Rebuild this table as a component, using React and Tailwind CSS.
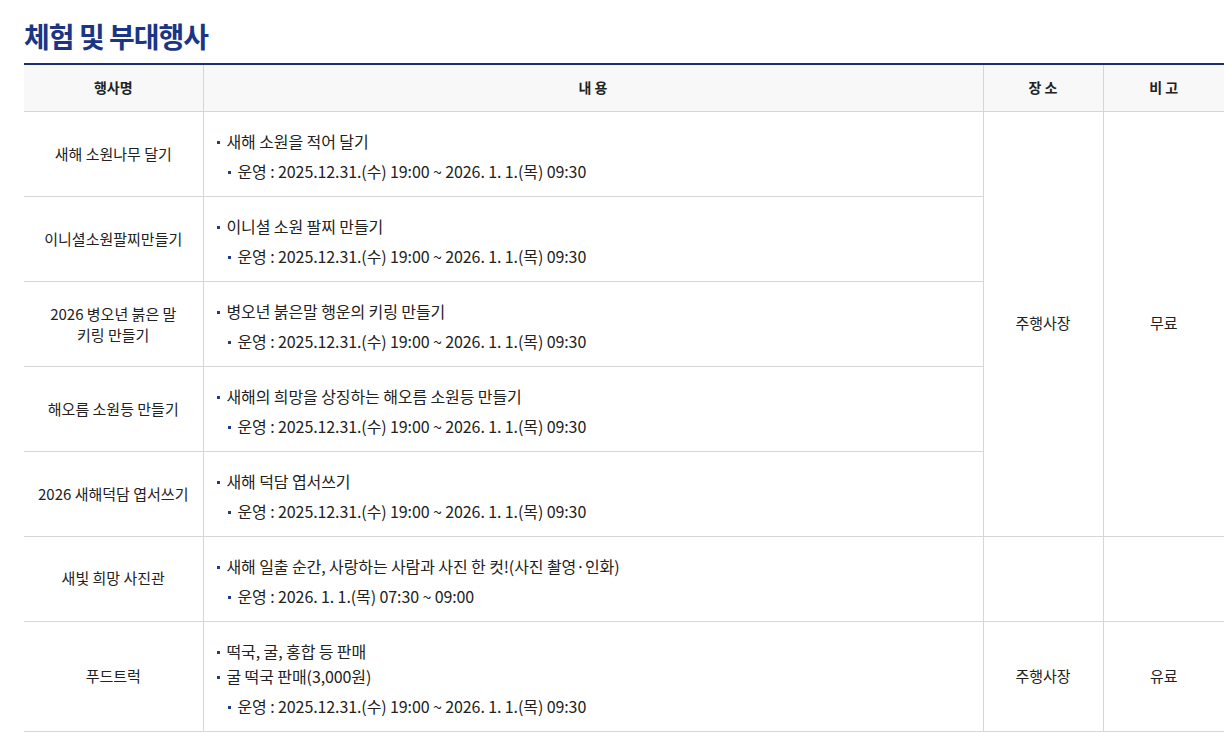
const EVENTS = [
  {
    name: ['새해 소원나무 달기'],
    items: ['새해 소원을 적어 달기'],
    time: '운영 : 2025.12.31.(수) 19:00 ~ 2026. 1. 1.(목) 09:30',
  },
  {
    name: ['이니셜소원팔찌만들기'],
    items: ['이니셜 소원 팔찌 만들기'],
    time: '운영 : 2025.12.31.(수) 19:00 ~ 2026. 1. 1.(목) 09:30',
  },
  {
    name: ['2026 병오년 붉은 말', '키링 만들기'],
    items: ['병오년 붉은말 행운의 키링 만들기'],
    time: '운영 : 2025.12.31.(수) 19:00 ~ 2026. 1. 1.(목) 09:30',
  },
  {
    name: ['해오름 소원등 만들기'],
    items: ['새해의 희망을 상징하는 해오름 소원등 만들기'],
    time: '운영 : 2025.12.31.(수) 19:00 ~ 2026. 1. 1.(목) 09:30',
  },
  {
    name: ['2026 새해덕담 엽서쓰기'],
    items: ['새해 덕담 엽서쓰기'],
    time: '운영 : 2025.12.31.(수) 19:00 ~ 2026. 1. 1.(목) 09:30',
  },
]

function Bullet({ children, sub }) {
  return (
    <li className={`flex items-center h-[25px] ${sub ? 'pl-[11px] mt-[5px]' : ''}`}>
      <span className="w-[3px] h-[3px] mt-[3px] bg-[#1e3a8a] mr-[7px] shrink-0" />
      <span>{children}</span>
    </li>
  )
}

function Content({ items, time }) {
  return (
    <td className="border border-[#d6d6d6] pl-[13px] pt-[4px] align-middle text-left text-[16px] tracking-[-0.1px]">
      <ul>
        {items.map((t) => (
          <Bullet key={t}>{t}</Bullet>
        ))}
        <Bullet sub>{time}</Bullet>
      </ul>
    </td>
  )
}

export default function App() {
  return (
    <div
      className="bg-white min-h-[744px] px-[24px] pt-[17px] text-[#222]"
      style={{ fontFamily: '"Noto Sans CJK KR", "Noto Sans", sans-serif' }}
    >
      <h2 className="text-[28px] leading-[38px] font-bold text-[#1b3584] tracking-[-1px] mb-[8px]">
        체험 및 부대행사
      </h2>

      <table className="w-[1200px] border-collapse table-fixed text-[15px] border-t-2 border-t-[#1c2f6e]">
        <colgroup>
          <col className="w-[179px]" />
          <col className="w-[780px]" />
          <col className="w-[120px]" />
          <col className="w-[121px]" />
        </colgroup>
        <thead>
          <tr className="h-[47px] bg-[#f8f8f8] text-[14px] font-bold text-[#222]">
            <th className="border-r border-b border-[#d6d6d6]">행사명</th>
            <th className="border border-t-0 border-[#d6d6d6]">내 용</th>
            <th className="border border-t-0 border-[#d6d6d6]">장 소</th>
            <th className="border-l border-b border-[#d6d6d6]">비 고</th>
          </tr>
        </thead>
        <tbody>
          {EVENTS.map((ev, i) => (
            <tr key={i} className="h-[85px]">
              <td className="border-r border-b border-[#d6d6d6] text-center leading-[21px]">
                {ev.name.map((n) => (
                  <div key={n}>{n}</div>
                ))}
              </td>
              <Content items={ev.items} time={ev.time} />
              {i === 0 && (
                <>
                  <td rowSpan={5} className="border border-[#d6d6d6] text-center">
                    주행사장
                  </td>
                  <td rowSpan={5} className="border-l border-b border-[#d6d6d6] text-center">
                    무료
                  </td>
                </>
              )}
            </tr>
          ))}
          <tr className="h-[85px]">
            <td className="border-r border-b border-[#d6d6d6] text-center">새빛 희망 사진관</td>
            <Content
              items={['새해 일출 순간, 사랑하는 사람과 사진 한 컷!(사진 촬영·인화)']}
              time="운영 : 2026. 1. 1.(목) 07:30 ~ 09:00"
            />
            <td className="border border-[#d6d6d6]" />
            <td className="border-l border-b border-[#d6d6d6]" />
          </tr>
          <tr className="h-[110px]">
            <td className="border-r border-b border-[#d6d6d6] text-center">푸드트럭</td>
            <Content
              items={['떡국, 굴, 홍합 등 판매', '굴 떡국 판매(3,000원)']}
              time="운영 : 2025.12.31.(수) 19:00 ~ 2026. 1. 1.(목) 09:30"
            />
            <td className="border border-[#d6d6d6] text-center">주행사장</td>
            <td className="border-l border-b border-[#d6d6d6] text-center">유료</td>
          </tr>
        </tbody>
      </table>
    </div>
  )
}
